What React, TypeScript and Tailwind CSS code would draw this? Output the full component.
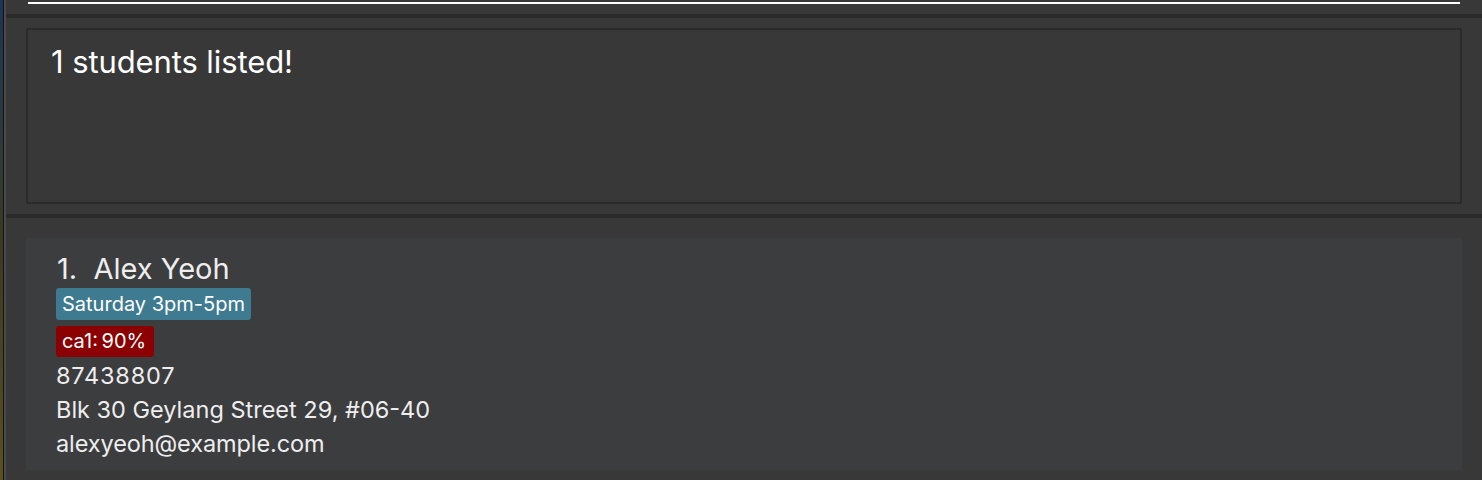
import React from "react";

export default function App() {
  return (
    <div
      className="flex h-[480px] w-[1482px] overflow-hidden bg-[#383838]"
      style={{ fontFamily: "Inter, 'Noto Sans', sans-serif" }}
    >
      <div className="flex h-full shrink-0">
        <div className="h-full w-[3px] bg-gradient-to-b from-[#1d3457] via-[#3a3a22] to-[#5a5020]" />
        <div className="h-full w-[1px] bg-[#141414]" />
        <div className="h-full w-[2px] bg-[#4a4a4a]" />
      </div>
      <div className="flex min-w-0 flex-1 flex-col">
        {/* command box remnant */}
        <div className="flex h-[14px] flex-col px-[22px] pt-[2px]">
          <div className="h-[2px] w-full bg-white" />
        </div>
        <div className="h-[4px] w-full bg-[#2b2b2b]" />
        {/* result display */}
        <div className="px-[20px] py-[10px]">
          <div className="h-[176px] border-2 border-[#2a2a2a] bg-[#383838] px-[23px] pt-[12px]">
            <div className="text-[31px] leading-[40px] tracking-[-0.1px] text-white">1 students listed!</div>
          </div>
        </div>
        <div className="h-[4px] w-full bg-[#2b2b2b]" />
        {/* list */}
        <div className="px-[20px] pt-[20px]">
          <div className="flex h-[232px] flex-col bg-[#3c3d3f] pl-[30px] pt-[12px] text-[#eeeeee]">
            <div className="pl-[1px] text-[29px] leading-[38px]">1.&nbsp;&nbsp;Alex Yeoh</div>
            <div className="flex">
              <span className="rounded-[3px] bg-[#3e7a90] px-[6px] text-[20px] leading-[32px] text-white">
                Saturday 3pm-5pm
              </span>
            </div>
            <div className="mt-[6px] flex">
              <span className="rounded-[3px] bg-[#8b0000] pl-[6px] pr-[8px] text-[20px] leading-[31px] text-white">
                ca1:&thinsp;90%
              </span>
            </div>
            <div className="mt-[2px] text-[23.5px] leading-[34px] tracking-[0.8px]">87438807</div>
            <div className="text-[23.5px] leading-[34px]">Blk 30 Geylang Street 29, #06-40</div>
            <div className="text-[23.5px] leading-[34px] tracking-[-0.1px]">alexyeoh@example.com</div>
          </div>
        </div>
      </div>
    </div>
  );
}
